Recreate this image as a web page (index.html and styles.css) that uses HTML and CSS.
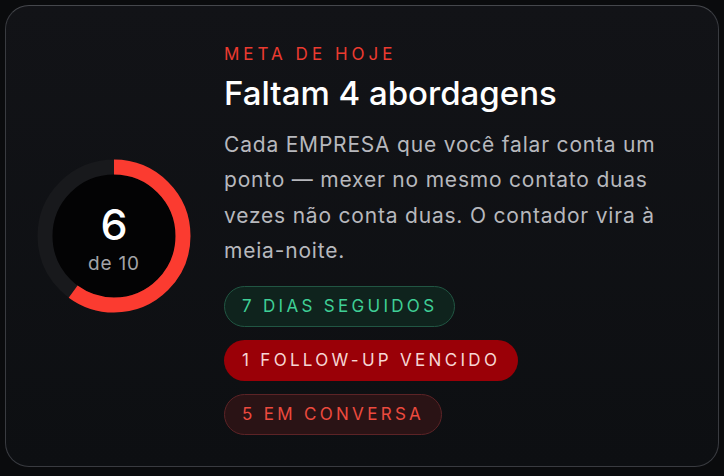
FILE: index.html
```html
<!DOCTYPE html>
<html lang="pt-BR">
<head>
  <meta charset="UTF-8" />
  <title>Meta de hoje</title>
  <meta name="viewport" content="width=device-width, initial-scale=1.0">
  <link rel="stylesheet" href="styles.css">
</head>
<body>
  <!-- Cartão da meta diária -->
  <div class="goal-card">
    <div class="ring">
      <svg class="ring-svg" viewBox="0 0 154 154" width="154" height="154">
        <circle class="ring-track" cx="77" cy="77" r="69" />
        <!-- 6 de 10 = 60% do círculo -->
        <circle class="ring-progress" cx="77" cy="77" r="69"
                stroke-dasharray="260.1 433.5" transform="rotate(-90 77 77)" />
      </svg>
      <div class="ring-center">
        <span class="ring-count">6</span>
        <span class="ring-total">de 10</span>
      </div>
    </div>

    <div class="goal-info">
      <div class="eyebrow">Meta de hoje</div>
      <h1 class="goal-title">Faltam 4 abordagens</h1>
      <p class="goal-text">Cada EMPRESA que você falar conta um ponto — mexer no mesmo contato duas vezes não conta duas. O contador vira à meia-noite.</p>

      <div class="pills">
        <span class="pill pill-streak">7 dias seguidos</span>
        <span class="pill pill-overdue">1 follow-up vencido</span>
        <span class="pill pill-talking">5 em conversa</span>
      </div>
    </div>
  </div>
</body>
</html>
```

FILE: styles.css
```css
body {
  margin: 0;
  padding: 5px;
  background-color: #0a0b0d;
  font-family: Inter, "Noto Sans", sans-serif;
  color: #f2f2f4;
}

.goal-card {
  display: flex;
  align-items: center;
  gap: 33px;
  box-sizing: border-box;
  width: 714px;
  height: 462px;
  padding: 5px 28px 0 31px;
  background: linear-gradient(180deg, #121317 0%, #0d0f12 100%);
  border: 1px solid #393b40;
  border-top-color: #45474c;
  border-radius: 24px;
}

/* Anel de progresso */
.ring {
  position: relative;
  flex: 0 0 154px;
  width: 154px;
  height: 154px;
  margin-top: -5px;
}

.ring-svg {
  display: block;
}

.ring-track {
  fill: #030304;
  stroke: #18191c;
  stroke-width: 15;
}

.ring-progress {
  fill: none;
  stroke: #fb3b30;
  stroke-width: 15;
}

.ring-center {
  position: absolute;
  inset: 0;
  display: flex;
  flex-direction: column;
  align-items: center;
  justify-content: center;
}

.ring-count {
  font-size: 43px;
  font-weight: 500;
  line-height: 1;
  color: #ffffff;
  margin-top: 6px;
}

.ring-total {
  font-size: 19px;
  color: #a2a3a8;
  margin-top: 6px;
  letter-spacing: 0.8px;
}

/* Coluna de texto */
.goal-info {
  flex: 1;
  display: flex;
  flex-direction: column;
  align-items: flex-start;
}

.eyebrow {
  font-size: 17px;
  line-height: 22px;
  text-transform: uppercase;
  letter-spacing: 4px;
  color: #ec3b30;
  margin-bottom: 8px;
}

.goal-title {
  margin: 0 0 14px;
  font-size: 33px;
  line-height: 40px;
  font-weight: 500;
  letter-spacing: 0;
  color: #ffffff;
}

.goal-text {
  margin: 0 0 17px;
  font-size: 21px;
  line-height: 35.5px;
  letter-spacing: 0.8px;
  color: #b7b8bd;
}

.pills {
  display: flex;
  flex-direction: column;
  align-items: flex-start;
  gap: 13px;
}

.pill {
  box-sizing: border-box;
  height: 41px;
  display: inline-flex;
  align-items: center;
  padding: 0 17px;
  border-radius: 21px;
  border: 1px solid transparent;
  font-size: 17px;
  text-transform: uppercase;
  letter-spacing: 3.3px;
}

.pill-streak {
  background-color: #0f231d;
  border-color: #215643;
  color: #3fcf96;
}

.pill-overdue {
  background-color: #9a0007;
  color: #f6d6d4;
}

.pill-talking {
  background-color: #2a1315;
  border-color: #5c2326;
  color: #ec4a3e;
}
```
